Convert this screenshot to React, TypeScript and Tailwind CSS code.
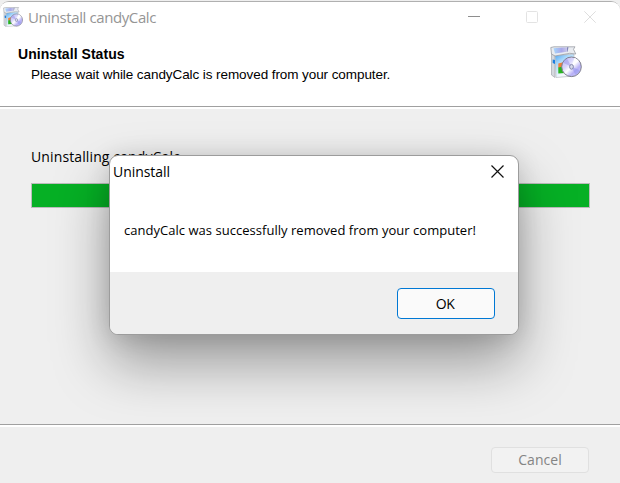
function InstallerIcon({ size }: { size: number }) {
  return (
    <svg width={size} height={size} viewBox="0 0 32 32" className="block shrink-0">
      <defs>
        <linearGradient id="boxFace" x1="0" y1="0" x2="0.6" y2="1">
          <stop offset="0" stopColor="#4aa4f2" />
          <stop offset="0.35" stopColor="#a9d8fb" />
          <stop offset="0.8" stopColor="#f4f8fc" />
        </linearGradient>
        <linearGradient id="boxTop" x1="0" y1="0" x2="1" y2="0">
          <stop offset="0" stopColor="#a6d6fb" />
          <stop offset="0.6" stopColor="#a9a8ea" />
          <stop offset="1" stopColor="#c8c8e8" />
        </linearGradient>
        <linearGradient id="disc" x1="0" y1="0" x2="1" y2="1">
          <stop offset="0" stopColor="#b9b4f2" />
          <stop offset="0.35" stopColor="#d9d6fc" />
          <stop offset="0.5" stopColor="#ffffff" />
          <stop offset="0.7" stopColor="#b7b0f6" />
          <stop offset="1" stopColor="#e2e4ff" />
        </linearGradient>
      </defs>
      <path d="M1.500 8 5 9v22.500l-3.500-2.500z" fill="#d5d9df" stroke="#a4a8ae" strokeWidth=".7" />
      <path d="M5 9.500 24 8v22L6 31.500z" fill="url(#boxFace)" stroke="#b8bcc2" strokeWidth=".7" />
      <path d="M.8 1.500 4 .8 25 .8l-1.500 2.500 2.300 4.700-6-.7L5 10 1.500 8z" fill="#e9ecf1" stroke="#999da3" strokeWidth=".8" />
      <path d="M3.500 2.300 17 1.300v4.500L5 7.500z" fill="url(#boxTop)" />
      <path d="M17 1.300h1.500L17.500 5.800H17z" fill="#8083b8" />
      <path d="M2.700 13.500 5 14v4l-2.300-1z" fill="#1d7fe0" />
      <path d="M8.300 17.500 14 16v5l-5.700 1z" fill="#f0803a" />
      <path d="M8.300 21.500 15 20v7l-6.700.5z" fill="#27b31f" />
      <circle cx="21.500" cy="20.800" r="9.800" fill="url(#disc)" stroke="#7f7f8c" strokeWidth="1" />
      <path d="m21.500 20.800-8.500-4a9.500 9.500 0 0 1 4-4.300z" fill="#9d99ea" opacity=".55" />
      <path d="m21.500 20.800 8.500 3.500a9.500 9.500 0 0 1-4.500 4.700z" fill="#8f91ee" opacity=".5" />
      <path d="m21.500 20.800 3-9a9.500 9.500 0 0 1 4 3z" fill="#fff" opacity=".9" />
      <ellipse cx="21.500" cy="20.800" rx="1.900" ry="2.400" fill="#d6d9ea" stroke="#7a7fa6" strokeWidth=".9" />
    </svg>
  );
}

function TitleBar() {
  return (
    <div className="flex h-[30px] items-center pl-[3px]">
      <InstallerIcon size={20} />
      <span className="ml-[5px] text-[15px] leading-[20px] whitespace-nowrap text-[#959595] tracking-[-0.4px]">
        Uninstall candyCalc
      </span>
      <div className="mr-[24px] ml-auto flex items-center gap-[46px]">
        <svg width="12" height="12" className="block">
          <path d="M0 5.500h12" stroke="#8e8e8e" />
        </svg>
        <svg width="12" height="12" className="block">
          <rect x=".5" y=".5" width="11" height="11" rx="1" fill="none" stroke="#e3e3e3" />
        </svg>
        <svg width="12" height="12" className="block">
          <path d="m.3.300 11.400 11.400M11.700.3.300 11.700" stroke="#dedede" />
        </svg>
      </div>
    </div>
  );
}

function Dialog() {
  return (
    <div className="absolute top-[155px] left-[109px] flex h-[180px] w-[410px] flex-col overflow-hidden rounded-[9px] border border-[#9c9c9c] bg-white text-black shadow-[0_28px_56px_rgba(0,0,0,0.36),0_2px_24px_rgba(0,0,0,0.12)]">
      <div className="flex h-[31px] items-center justify-between pr-[14px] pl-[3px]">
        <span className="text-[14px] leading-[20px] tracking-[-0.05px]">Uninstall</span>
        <svg width="13" height="13" className="block">
          <path d="m.5.500 12 12M12.500.5l-12 12" stroke="#111" strokeWidth="1.200" />
        </svg>
      </div>
      <p className="mt-[33px] ml-[14px] text-[13px] leading-[20px] whitespace-nowrap tracking-[0.03px]">
        candyCalc was successfully removed from your computer!
      </p>
      <div className="mt-auto flex h-[62px] justify-end bg-[#efefef] pt-[16px] pr-[23px]">
        <button className="h-[31px] w-[98px] rounded-[4px] border border-[#0078d4] bg-[#fafafa] pr-[2px] text-[14px] leading-none tracking-[-0.5px]">
          OK
        </button>
      </div>
    </div>
  );
}

export default function App() {
  return (
    <div className="relative h-[483px] w-[620px] overflow-hidden bg-[#efefef] pt-px font-['Open_Sans','Noto_Sans',sans-serif]">
      <div className="flex h-[482px] flex-col overflow-hidden rounded-t-[9px] border-t border-[#b0b0b0] bg-[#efefef]">
        <header className="h-[105px] shrink-0 border-b border-[#a0a0a0] bg-white">
          <TitleBar />
          <div className="flex justify-between pr-[38px] pl-[18px] font-['Liberation_Sans',Arial,sans-serif] text-black">
            <div className="pt-[14px]">
              <h1 className="text-[14px] leading-[16px] font-bold whitespace-nowrap tracking-[0.05px]">Uninstall Status</h1>
              <p className="mt-[5px] ml-[13px] text-[13.500px] leading-[16px] whitespace-nowrap tracking-[-0.08px]">
                Please wait while candyCalc is removed from your computer.
              </p>
            </div>
            <div className="pt-[14px]">
              <InstallerIcon size={32} />
            </div>
          </div>
        </header>
        <main className="h-[317px] shrink-0 border-t-2 border-white px-[31px] pt-[38px]">
          <p className="text-[14px] leading-[20px] whitespace-nowrap text-black tracking-[0.12px]">Uninstalling candyCalc...</p>
          <div className="mt-[16px] h-[25px] w-[559px] border border-[#bcbcbc] bg-[#06b025]" />
        </main>
        <footer className="flex flex-1 justify-end border-t border-[#a0a0a0]">
          <div className="flex flex-1 justify-end border-t-2 border-white pt-[20px] pr-[31px]">
            <button className="h-[26px] w-[98px] rounded-[4px] border border-[#e0e0e0] bg-[#f2f2f2] text-[14px] leading-none text-[#848484] tracking-[0.05px]">
              Cancel
            </button>
          </div>
        </footer>
      </div>
      <Dialog />
    </div>
  );
}
